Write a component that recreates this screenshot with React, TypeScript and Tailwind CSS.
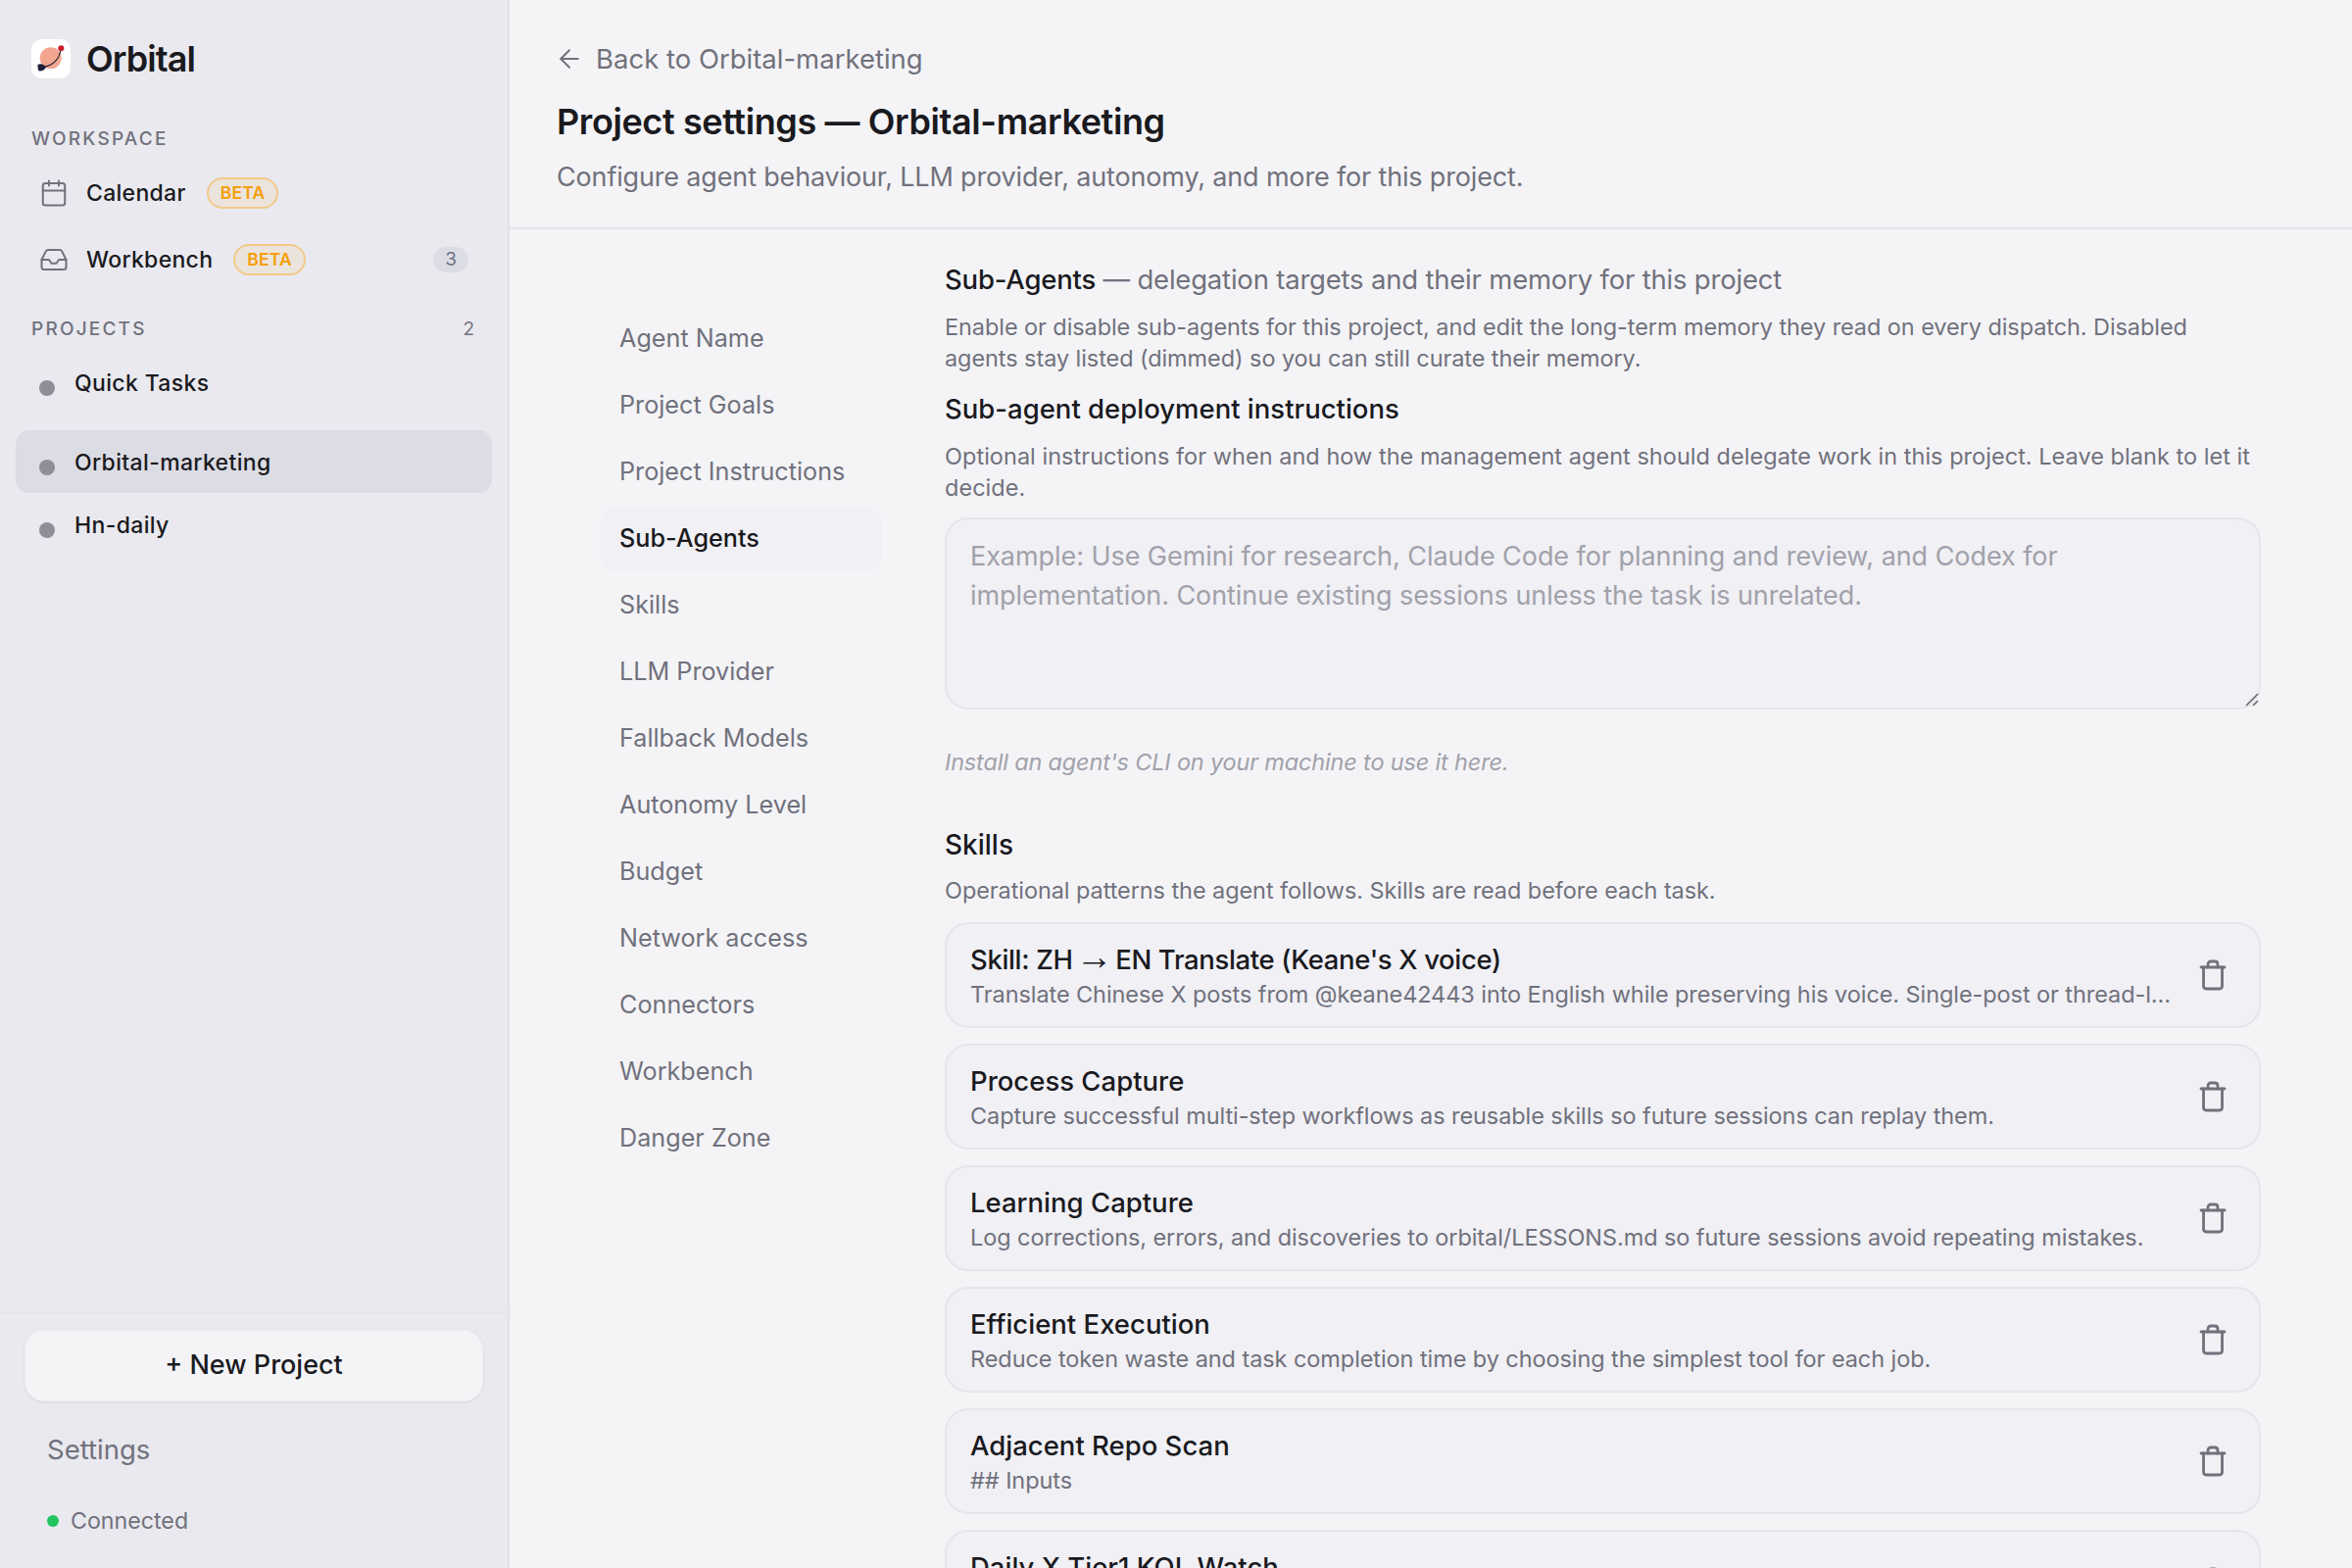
import { ArrowLeft, Calendar, Inbox } from 'lucide-react'

const navItems = [
  'Agent Name',
  'Project Goals',
  'Project Instructions',
  'Sub-Agents',
  'Skills',
  'LLM Provider',
  'Fallback Models',
  'Autonomy Level',
  'Budget',
  'Network access',
  'Connectors',
  'Workbench',
  'Danger Zone',
]

const skills = [
  {
    name: (
      <span className="tracking-[-0.35px]">
        Skill: ZH <span className="-mx-[4px] font-['Liberation_Sans',sans-serif] text-[38px] leading-[30px] font-normal">→</span> EN Translate (Keane's X voice)
      </span>
    ),
    key: 'translate',
    desc: 'Translate Chinese X posts from @keane42443 into English while preserving his voice. Single-post or thread-level translation with tone matching for every reply',
  },
  {
    name: 'Process Capture',
    key: 'process',
    desc: 'Capture successful multi-step workflows as reusable skills so future sessions can replay them.',
  },
  {
    name: 'Learning Capture',
    key: 'learning',
    desc: 'Log corrections, errors, and discoveries to orbital/LESSONS.md so future sessions avoid repeating mistakes.',
  },
  {
    name: 'Efficient Execution',
    key: 'efficient',
    desc: 'Reduce token waste and task completion time by choosing the simplest tool for each job.',
  },
  { name: 'Adjacent Repo Scan', key: 'adjacent', desc: '## Inputs' },
  { name: 'Daily X Tier1 KOL Watch', key: 'daily', desc: 'Scan tier-one accounts and summarise what changed today.' },
]

function Logo() {
  return (
    <div className="h-[40px] w-[40px] rounded-[10px] bg-white">
      <svg width="40" height="40" viewBox="0 0 40 40" fill="none">
        <circle cx="19.7" cy="19.3" r="11" fill="#f4a58f" />
        <path d="M30 10C29 20 22 27 13 28" stroke="#1d1f3a" strokeWidth="1.1" />
        <circle cx="30.3" cy="9.3" r="3" fill="#c9202e" />
        <path d="M6.5 26C9 24.5 13 25 15 29 12 33 7.5 33.5 7 31 6.5 29 6.5 27.5 6.5 26z" fill="#1d1f3a" />
      </svg>
    </div>
  )
}

function Beta() {
  return (
    <span className="block rounded-full border-2 border-[#f3c98a] bg-[#ebe4dc] px-[12px] py-[3px] text-[17.5px] leading-[22px] font-semibold tracking-[0.2px] text-[#f59e0b]">
      BETA
    </span>
  )
}

function ProjectRow({ label, active }: { label: string; active?: boolean }) {
  return (
    <div
      className={`flex h-[64px] items-center gap-[20px] rounded-[14px] pl-[24px] ${active ? 'bg-[#dcdce5]' : ''}`}
    >
      <span className="mt-[11px] h-[16px] w-[16px] rounded-full bg-[#8e8e99]" />
      <span className="mt-[3px] text-[23px] font-medium tracking-[0.35px] text-[#1a1a1e]">{label}</span>
    </div>
  )
}

function Sidebar() {
  return (
    <aside className="flex h-full w-[520px] shrink-0 flex-col border-r-2 border-[#e1e1e7] bg-[#e9e9ef]">
      <div className="flex flex-1 flex-col px-[16px]">
        <div className="flex items-center gap-[16px] pt-[40px] pl-[16px]">
          <Logo />
          <span className="text-[36px] leading-[40px] font-semibold tracking-[-0.9px] text-[#1a1a1e]">Orbital</span>
        </div>

        <div className="mt-[50px] pl-[16px] text-[19px] leading-[24px] font-medium tracking-[2.2px] text-[#71717c]">
          WORKSPACE
        </div>
        <div className="mt-[23px] flex h-[40px] items-center pl-[24px]">
          <Calendar size={30} strokeWidth={1.6} className="text-[#71717c]" />
          <span className="ml-[18px] text-[23px] font-medium tracking-[0.3px] text-[#1a1a1e]">Calendar</span>
          <span className="ml-[21px]">
            <Beta />
          </span>
        </div>
        <div className="mt-[28px] flex h-[40px] items-center pl-[24px] pr-[24px]">
          <Inbox size={30} strokeWidth={1.6} className="text-[#71717c]" />
          <span className="ml-[18px] text-[23px] font-medium tracking-[0.3px] text-[#1a1a1e]">Workbench</span>
          <span className="ml-[21px]">
            <Beta />
          </span>
          <span className="ml-auto rounded-full bg-[#dcdce5] px-[12px] text-[19px] leading-[26px] text-[#71717c]">3</span>
        </div>

        <div className="mt-[39px] flex items-center justify-between pl-[16px] pr-[18px] text-[19px] leading-[24px] font-medium tracking-[2.2px] text-[#71717c]">
          <span>PROJECTS</span>
          <span className="font-normal tracking-normal">2</span>
        </div>
        <div className="mt-[10px] flex flex-col">
          <ProjectRow label="Quick Tasks" />
          <div className="h-[17px]" />
          <ProjectRow label="Orbital-marketing" active />
          <ProjectRow label="Hn-daily" />
        </div>
      </div>

      <div className="flex h-[262px] flex-col border-t-2 border-[#e4e4ea] px-[25px] pt-[17px]">
        <button className="h-[73px] shrink-0 rounded-[20px] border border-[#efeff3] bg-[#f4f4f7] text-[27px] font-medium text-[#1a1a1e] shadow-[0_1px_3px_rgba(0,0,0,0.08)]">
          + New Project
        </button>
        <div className="mt-[29px] pl-[23px] text-[27.5px] leading-[40px] text-[#71717c]">Settings</div>
        <div className="mt-[37px] flex items-center gap-[12px] pl-[23px]">
          <span className="h-[12px] w-[12px] rounded-full bg-[#22c55e]" />
          <span className="text-[23.2px] leading-[32px] text-[#71717c]">Connected</span>
        </div>
      </div>
    </aside>
  )
}

function TrashIcon() {
  return (
    <svg width="28" height="32" viewBox="0 0 28 32" fill="none" stroke="#71717c" strokeWidth="2.8" strokeLinecap="round" strokeLinejoin="round">
      <path d="M2 8h24" />
      <path d="M4.5 8v19c0 2 1.3 3 3 3h13c1.7 0 3-1 3-3V8" />
      <path d="M9 8V5c0-2 1.3-3 3-3h4c1.7 0 3 1 3 3v3" />
    </svg>
  )
}

function SkillCard({ name, desc }: { name: React.ReactNode; desc: string }) {
  return (
    <div className="flex h-[108px] items-center rounded-[24px] border-2 border-[#e6e6ea] bg-[#f0f0f5] pl-[24px] pr-[33px]">
      <div className="min-w-0 flex-1 pr-[23px]">
        <div className="truncate text-[27.5px] leading-[38px] font-medium text-[#1a1a1e]">{name}</div>
        <div className="mt-[1px] truncate text-[23.5px] leading-[32px] tracking-[-0.08px] text-[#71717c]">{desc}</div>
      </div>
      <TrashIcon />
    </div>
  )
}

export default function App() {
  return (
    <div className="flex h-[1600px] w-[2400px] overflow-hidden bg-[#f4f4f7] font-['Inter',sans-serif]">
      <Sidebar />
      <main className="flex min-w-0 flex-1 flex-col">
        <header className="h-[234px] shrink-0 border-b-2 border-[#e4e4ea] pt-[40px] pl-[46px]">
          <div className="flex items-center gap-[12px] text-[27.5px] leading-[40px] text-[#71717c]">
            <ArrowLeft size={30} strokeWidth={1.6} />
            <span>Back to Orbital-marketing</span>
          </div>
          <h1 className="mt-[22px] pl-[2px] text-[36px] leading-[44px] font-semibold tracking-[-0.4px] text-[#1a1a1e]">
            Project settings — Orbital-marketing
          </h1>
          <p className="mt-[15px] pl-[2px] text-[27px] leading-[40px] tracking-[-0.16px] text-[#71717c]">
            Configure agent behaviour, LLM provider, autonomy, and more for this project.
          </p>
        </header>

        <div className="flex min-h-0 flex-1 pl-[92px]">
          <nav className="mt-[80px] flex w-[288px] shrink-0 flex-col gap-[4px]">
            {navItems.map((item) => (
              <div
                key={item}
                className={`flex h-[64px] shrink-0 items-center rounded-[16px] px-[20px] text-[25.2px] ${
                  item === 'Sub-Agents' ? 'bg-[#f0f0f5] font-medium text-[#1a1a1e]' : 'text-[#71717c]'
                }`}
              >
                {item}
              </div>
            ))}
          </nav>

          <section className="ml-[64px] w-[1343px] shrink-0 pt-[31px]">
            <h2 className="text-[27.5px] leading-[40px] tracking-[-0.2px] text-[#71717c]">
              <span className="font-medium text-[#1a1a1e]">Sub-Agents</span> — delegation targets and their memory for this project
            </h2>
            <p className="mt-[13px] text-[23.5px] leading-[32px] tracking-[-0.08px] text-[#71717c]">
              Enable or disable sub-agents for this project, and edit the long-term memory they read on every dispatch. Disabled agents stay listed (dimmed) so you can still curate their memory.
            </p>
            <h3 className="mt-[16px] text-[27.5px] leading-[38px] font-medium text-[#1a1a1e]">Sub-agent deployment instructions</h3>
            <p className="mt-[14px] text-[23.5px] leading-[32px] tracking-[0.03px] text-[#71717c]">
              Optional instructions for when and how the management agent should delegate work in this project. Leave blank to let it decide.
            </p>
            <div className="relative mt-[14px]">
              <textarea
                className="block h-[196px] w-full resize-none rounded-[24px] border-2 border-[#e6e6ea] bg-[#f0f0f5] px-[24px] py-[18px] text-[27px] leading-[40px] tracking-[-0.06px] outline-none placeholder:text-[#a1a1aa]"
                placeholder="Example: Use Gemini for research, Claude Code for planning and review, and Codex for implementation. Continue existing sessions unless the task is unrelated."
              />
              <svg className="absolute right-[2px] bottom-[3px]" width="14" height="14" viewBox="0 0 14 14" stroke="#6b6b6b" strokeWidth="1.6">
                <path d="M1 13L13 1M8 13l5-5" />
              </svg>
            </div>
            <p className="mt-[38px] text-[23.5px] leading-[32px] tracking-[-0.17px] text-[#a1a1aa] italic">Install an agent's CLI on your machine to use it here.</p>

            <h3 className="mt-[49px] text-[28px] leading-[38px] font-medium text-[#1a1a1e]">Skills</h3>
            <p className="mt-[12px] text-[23.5px] leading-[32px] tracking-[-0.08px] text-[#71717c]">
              Operational patterns the agent follows. Skills are read before each task.
            </p>
            <div className="mt-[16px] flex flex-col gap-[16px]">
              {skills.map((s) => (
                <SkillCard key={s.key} name={s.name} desc={s.desc} />
              ))}
            </div>
          </section>
        </div>
      </main>
    </div>
  )
}
